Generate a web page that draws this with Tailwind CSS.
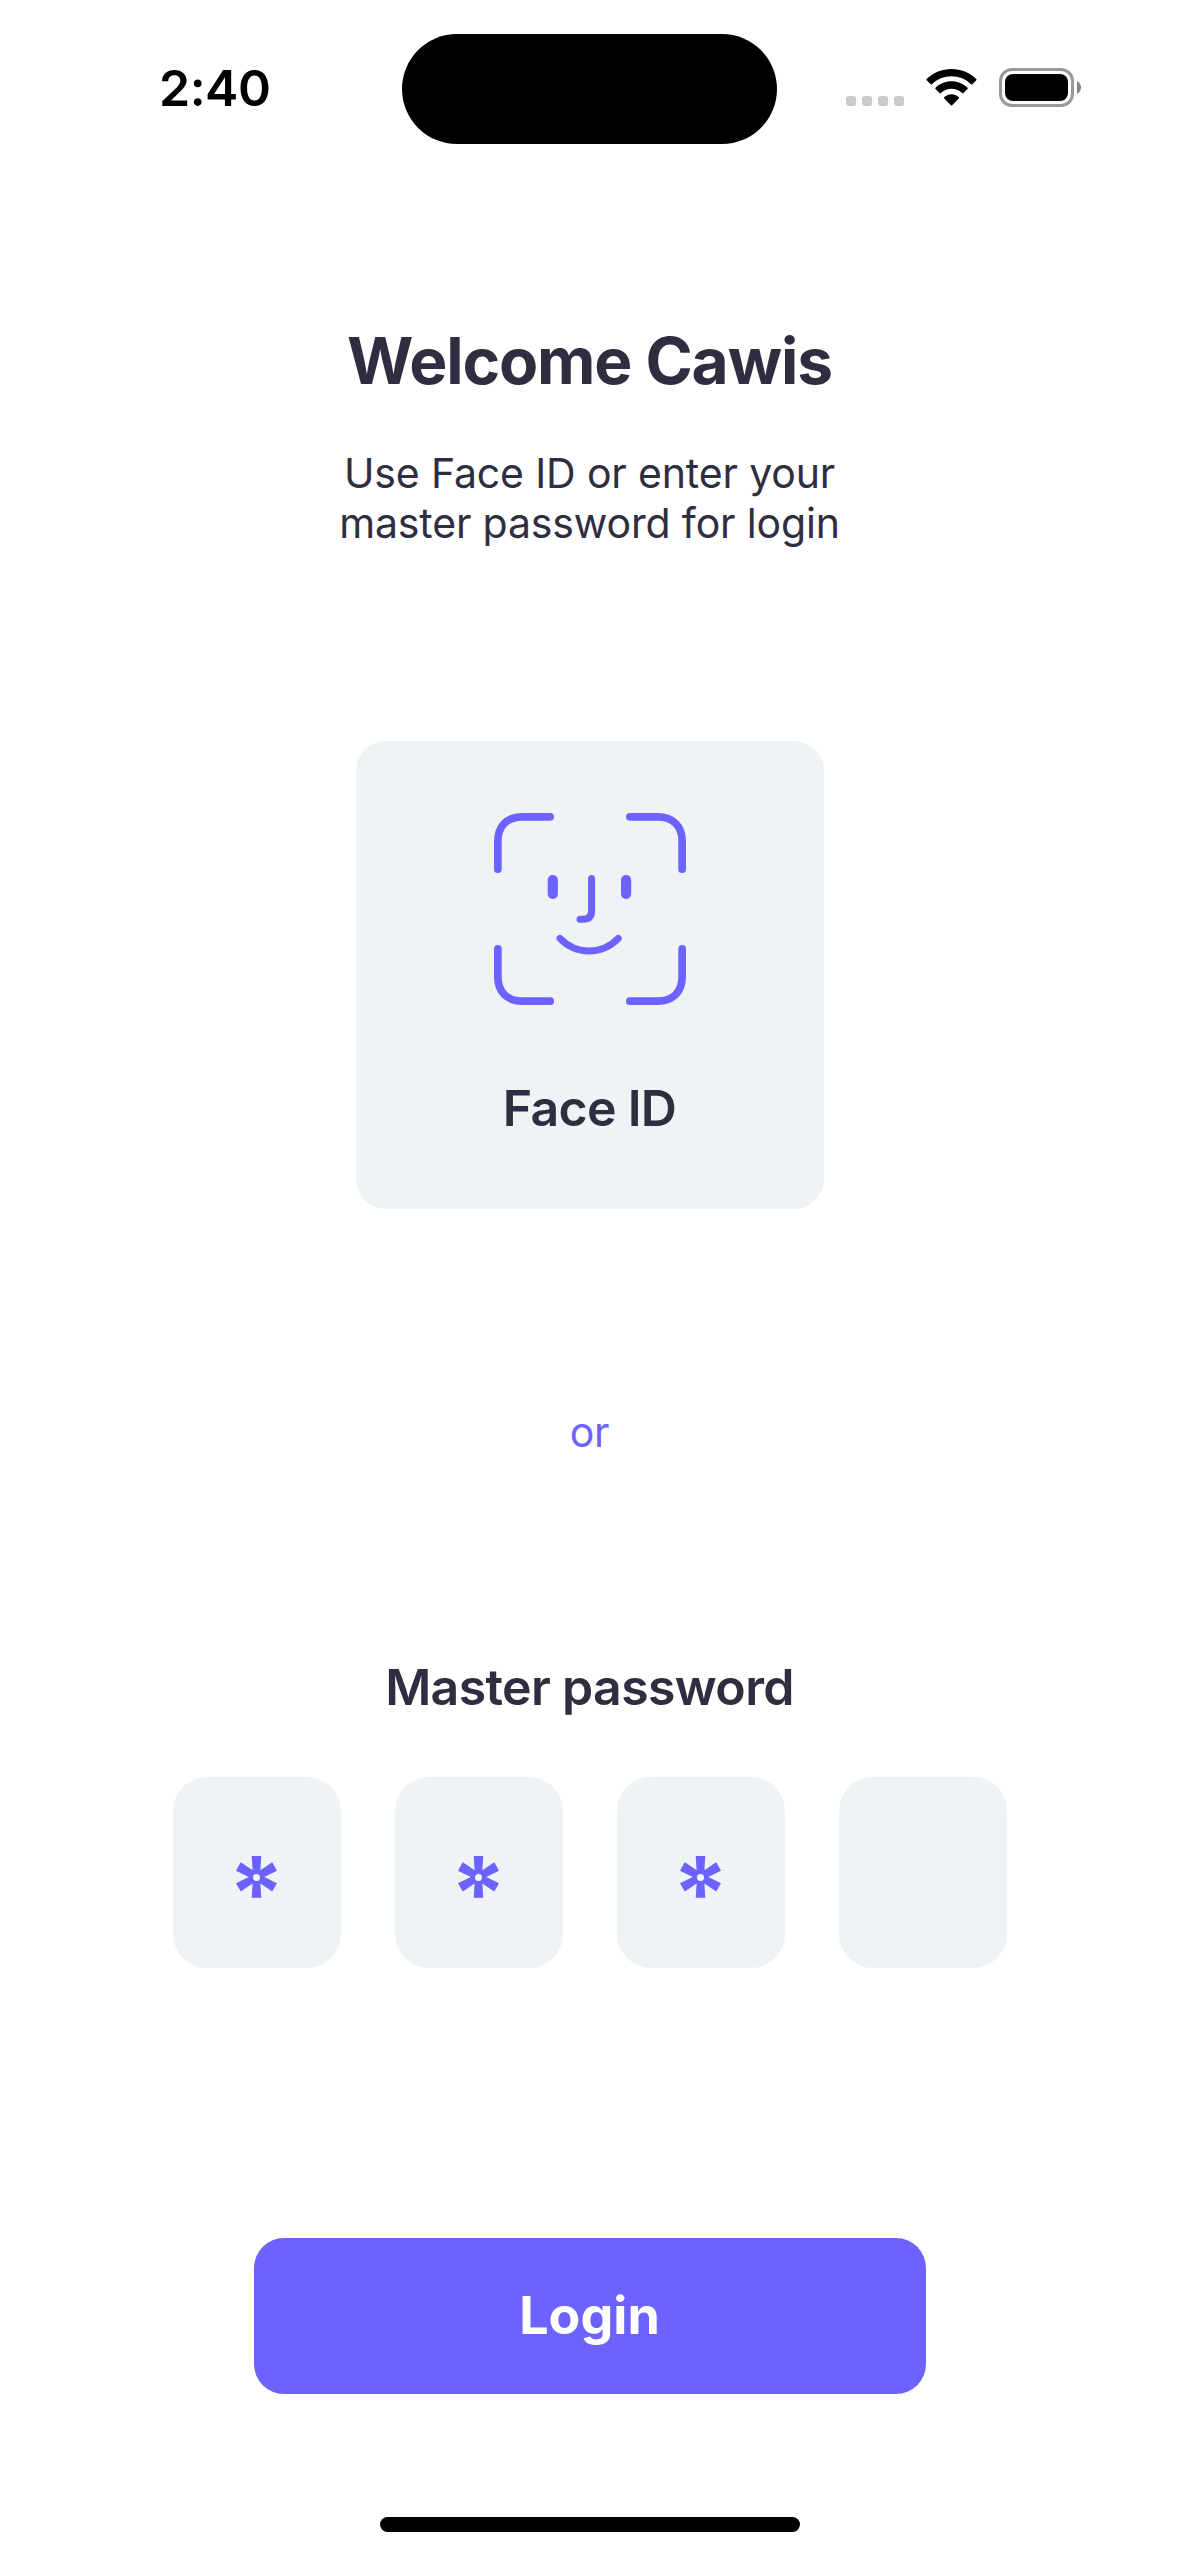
<!DOCTYPE html>
<html lang="en">
<head>
<meta charset="utf-8">
<title>Login</title>
<script src="https://cdn.jsdelivr.net/npm/@tailwindcss/browser@4"></script>
</head>
<body class="bg-white">
<div class="flex h-[2556px] w-[1179px] flex-col items-center overflow-hidden bg-white font-['Inter',sans-serif] text-[#2f2e41]">

  <!-- Status bar -->
  <header class="grid h-[176px] w-full shrink-0 grid-cols-[402px_375px_402px] text-black">
    <div class="pt-[58px] pl-[159px] text-[50px] leading-[60px] font-semibold tracking-[-0.5px]">2:40</div>
    <div class="mt-[33.5px] h-[110.5px] rounded-full bg-black"></div>
    <div class="flex items-start pl-[69px]">
      <div class="mt-24 flex gap-1.5">
        <span class="size-2.5 rounded-[3px] bg-[#cbcbcb]"></span>
        <span class="size-2.5 rounded-[3px] bg-[#cbcbcb]"></span>
        <span class="size-2.5 rounded-[3px] bg-[#cbcbcb]"></span>
        <span class="size-2.5 rounded-[3px] bg-[#cbcbcb]"></span>
      </div>
      <svg class="mt-[69px] ml-[22px]" width="51" height="37" viewBox="0 0 51 37" fill="#000">
        <path d="M25.500 0C35 0 43.700 3.600 50.300 10C50.700 10.400 50.700 10.900 50.300 11.300L46.300 15.300C45.900 15.700 45.400 15.700 45 15.300C39.900 10.200 33 7.300 25.500 7.300S11.100 10.200 6 15.300C5.600 15.700 5.100 15.700 4.700 15.300L.7 11.300C.3 10.900 .3 10.400 .7 10C7.300 3.600 16 0 25.500 0Z"/>
        <path d="M25.500 12.300C31.700 12.300 37.300 14.800 41.500 18.800C41.900 19.200 41.900 19.700 41.500 20.100L37.500 24.100C37.100 24.500 36.600 24.500 36.200 24.100C33.400 21.400 29.600 19.800 25.500 19.800S17.600 21.400 14.800 24.100C14.400 24.500 13.900 24.500 13.500 24.100L9.500 20.100C9.100 19.700 9.100 19.200 9.500 18.800C13.700 14.800 19.300 12.300 25.500 12.300Z"/>
        <path d="M25.500 25.200C28.300 25.200 30.800 26.300 32.700 28.100C33.100 28.500 33.100 29 32.700 29.400L26.200 36.200C25.800 36.600 25.200 36.600 24.800 36.200L18.300 29.400C17.900 29 17.900 28.500 18.300 28.100C20.200 26.300 22.700 25.200 25.500 25.200Z"/>
      </svg>
      <svg class="mt-[68px] ml-[22px]" width="83" height="39" viewBox="0 0 83 39">
        <rect x="1.500" y="1.500" width="72" height="36" rx="11.500" fill="none" stroke="#999" stroke-width="3"/>
        <rect x="6" y="6" width="63" height="27" rx="8" fill="#000"/>
        <path d="M78 13.200C80.500 14.200 82 16.700 82 19.500S80.500 24.800 78 25.800Z" fill="#858585"/>
      </svg>
    </div>
  </header>

  <h1 class="mt-[145px] text-[64px] leading-[80px] font-bold tracking-[-1.12px]">Welcome Cawis</h1>
  <p class="mt-[47px] text-center text-[41px] leading-[50px] tracking-[-0.15px]">Use Face ID or enter your<br>master password for login</p>

  <!-- Face ID card -->
  <button class="mt-[193px] flex size-[468px] flex-col items-center rounded-[30px] bg-[#eff3f6] pt-[72px]">
    <svg width="192" height="192" viewBox="0 0 192 192" fill="none" stroke="#6c63ff" stroke-width="7.700" stroke-linecap="round">
      <path d="M3.850 56.200V28.500C3.850 13 13 3.850 28.500 3.850H56.200"/>
      <path d="M135.800 3.850H163.500C179 3.850 188.150 13 188.150 28.500V56.200"/>
      <path d="M188.150 135.800V163.500C188.150 179 179 188.150 163.500 188.150H135.800"/>
      <path d="M56.200 188.150H28.500C13 188.150 3.850 179 3.850 163.500V135.800"/>
      <path d="M97.600 65.600V98Q97.600 106.300 89 106.300H86M66 125.400C82 142.200 108 142.200 124.300 125.400" stroke-width="7"/>
      <g fill="#6c63ff" stroke="none">
        <rect x="53.700" y="62" width="10.200" height="24" rx="5"/>
        <rect x="127" y="62" width="10.200" height="24" rx="5"/>
      </g>
    </svg>
    <span class="mt-[73px] text-[50px] leading-[60px] font-semibold tracking-[-0.7px]">Face ID</span>
  </button>

  <p class="mt-[198px] text-[41px] leading-[50px] tracking-[-0.3px] text-[#6c63ff]">or</p>

  <h2 class="mt-[200px] text-[50px] leading-[60px] font-semibold tracking-[-0.65px]">Master password</h2>

  <!-- PIN cells: the small disc opens the centre of each asterisk -->
  <div class="mt-[60px] flex gap-[54px] text-[102px] leading-[116px] font-bold text-[#6c63ff]">
    <div class="relative flex h-[191px] w-[168px] justify-center rounded-[34px] bg-[#eff3f6] pt-[58px]">*<i class="absolute top-[96.500px] left-[80.500px] size-[7px] rounded-full bg-[#f4f6fc]"></i></div>
    <div class="relative flex h-[191px] w-[168px] justify-center rounded-[34px] bg-[#eff3f6] pt-[58px]">*<i class="absolute top-[96.500px] left-[80.500px] size-[7px] rounded-full bg-[#f4f6fc]"></i></div>
    <div class="relative flex h-[191px] w-[168px] justify-center rounded-[34px] bg-[#eff3f6] pt-[58px]">*<i class="absolute top-[96.500px] left-[80.500px] size-[7px] rounded-full bg-[#f4f6fc]"></i></div>
    <div class="h-[191px] w-[168px] rounded-[34px] bg-[#eff3f6]"></div>
  </div>

  <button class="mt-[270px] h-[156px] w-[672px] rounded-[30px] bg-[#6c63ff] text-[52px] leading-[60px] font-bold text-white">Login</button>

  <!-- Home indicator -->
  <div class="mt-[123px] h-[15px] w-[420px] rounded-full bg-black"></div>
</div>
</body>
</html>
